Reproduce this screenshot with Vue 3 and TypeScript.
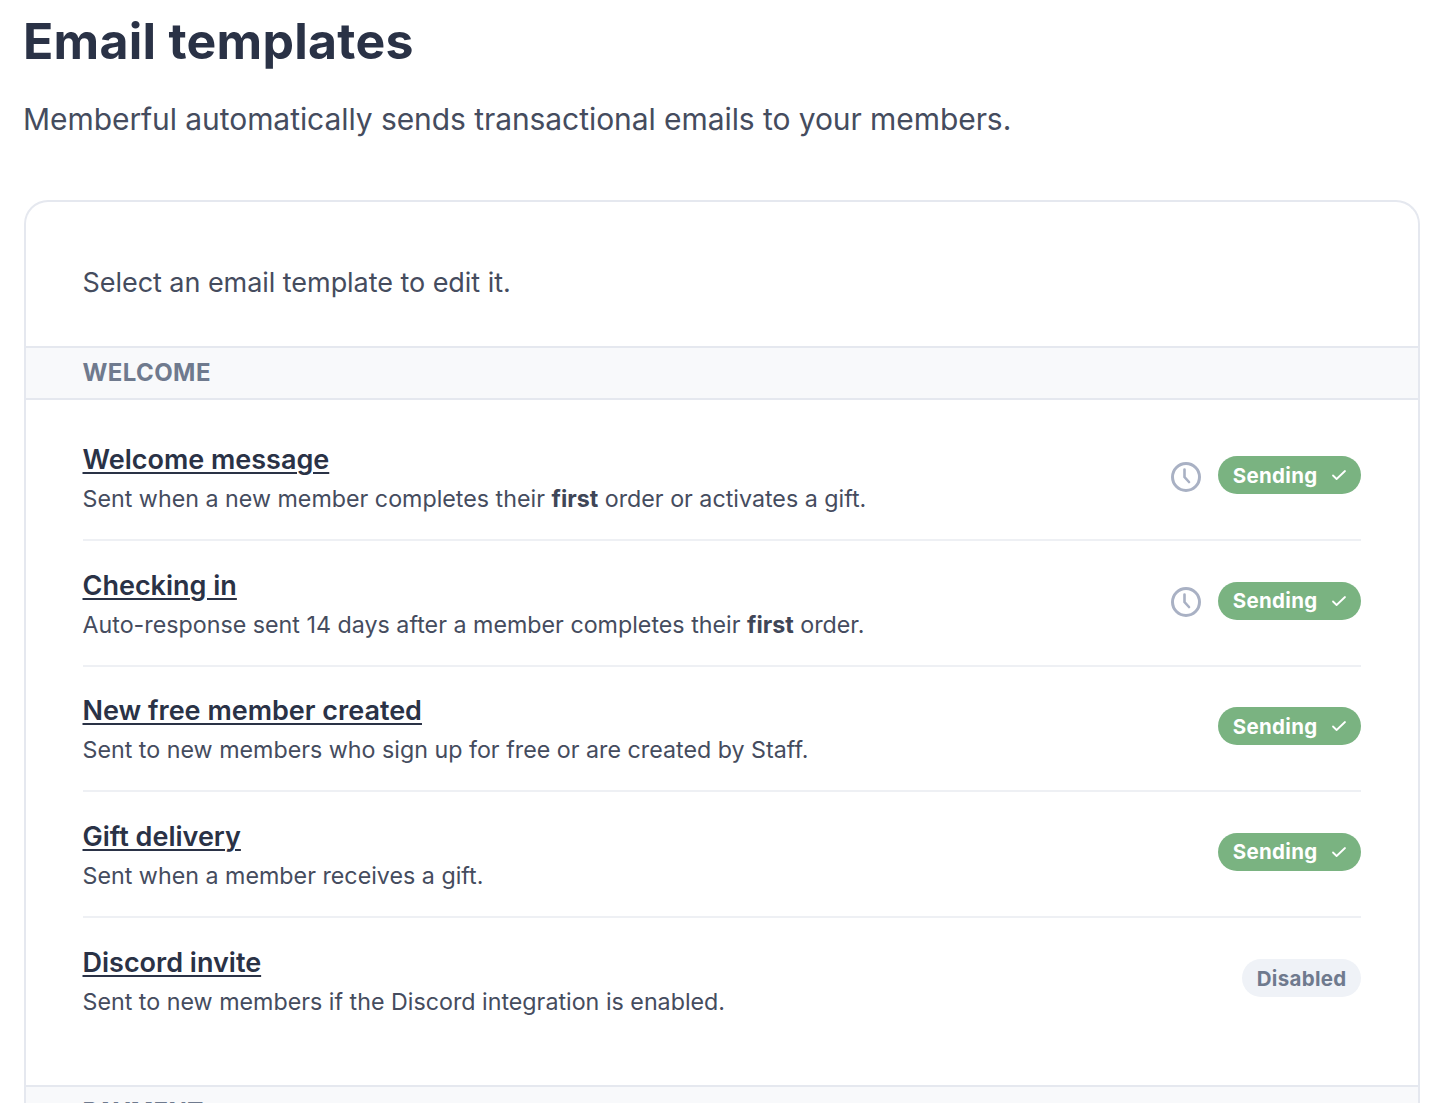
<script setup lang="ts">
interface Row { title: string; pre: string; bold?: string; post?: string; clock?: boolean; sending: boolean }
const rows: Row[] = [
  { title: 'Welcome message', pre: 'Sent when a new member completes their ', bold: 'first', post: ' order or activates a gift.', clock: true, sending: true },
  { title: 'Checking in', pre: 'Auto-response sent 14 days after a member completes their ', bold: 'first', post: ' order.', clock: true, sending: true },
  { title: 'New free member created', pre: 'Sent to new members who sign up for free or are created by Staff.', sending: true },
  { title: 'Gift delivery', pre: 'Sent when a member receives a gift.', sending: true },
  { title: 'Discord invite', pre: 'Sent to new members if the Discord integration is enabled.', sending: false },
]
</script>

<template>
  <main class="page">
    <h1 class="title">Email templates</h1>
    <p class="subtitle">Memberful automatically sends transactional emails to your members.</p>
    <section class="card">
      <p class="intro">Select an email template to edit it.</p>
      <h2 class="section">WELCOME</h2>
      <ul class="rows">
        <li v-for="r in rows" :key="r.title" class="row">
          <div class="text">
            <a class="name">{{ r.title }}</a>
            <p class="desc">{{ r.pre }}<b v-if="r.bold">{{ r.bold }}</b>{{ r.post }}</p>
          </div>
          <div class="status">
            <svg v-if="r.clock" class="clock" width="32" height="32" viewBox="0 0 32 32" fill="none" stroke="#a9b1c4" stroke-width="3" stroke-linecap="round">
              <circle cx="16" cy="16" r="13.5" />
              <path d="M14.5 8.5V16l4.5 5" stroke-width="2.6" />
            </svg>
            <span v-if="r.sending" class="pill green">Sending
              <svg width="16" height="16" viewBox="0 0 16 16" fill="none" stroke="#fff" stroke-width="1.8" stroke-linecap="round" stroke-linejoin="round"><path d="M2 8.5l3.6 3.5L14 4" /></svg>
            </span>
            <span v-else class="pill gray">Disabled</span>
          </div>
        </li>
      </ul>
      <h2 class="section">PAYMENT</h2>
    </section>
  </main>
</template>

<style>
html, body { margin: 0; background: #fff; overflow: hidden; }
</style>

<style scoped>
.page {
  height: 1103px;
  overflow: hidden;
  box-sizing: border-box;
  padding: 0 20px 0 24px;
  font-family: Inter, Lato, sans-serif;
  color: #3f4657;
}
.title {
  margin: 0 0 0 -1px;
  padding-top: 10px;
  font-size: 50px;
  line-height: 62px;
  font-weight: 700;
  letter-spacing: 0.25px;
  color: #2a3246;
}
.subtitle {
  margin: 26px 0 0 -1px;
  font-size: 30px;
  line-height: 42px;
  letter-spacing: -0.07px;
  color: #454c5e;
}
.card {
  margin-top: 60px;
  border: 2px solid #e5e8ef;
  border-bottom: 0;
  border-radius: 24px 24px 0 0;
}
.intro {
  margin: 0;
  padding: 0 56.5px;
  height: 144px;
  line-height: 162px;
  font-size: 27px;
  letter-spacing: -0.05px;
  color: #454c5e;
}
.section {
  margin: 0;
  padding: 0 56.5px;
  height: 50px;
  line-height: 50px;
  font-size: 24px;
  font-weight: 700;
  letter-spacing: 0.4px;
  color: #6f7a8e;
  background: #f8f9fb;
  border-top: 2px solid #e5e8ef;
  border-bottom: 2px solid #e5e8ef;
}
.rows {
  list-style: none;
  margin: 0;
  padding: 15.5px 57px 41.5px;
}
.row {
  display: flex;
  align-items: center;
  justify-content: space-between;
  height: 125.5px;
  box-sizing: border-box;
  border-bottom: 2px solid #eef0f4;
}
.row:last-child { border-bottom: 0; }
.text { margin: 5px 0 0 -0.5px; }
.name {
  display: block;
  font-size: 27px;
  line-height: 36px;
  font-weight: 600;
  color: #2a3246;
  text-decoration: underline;
  text-underline-offset: 3px;
  text-decoration-thickness: 2px;
}
.desc {
  margin: 3px 0 0;
  font-size: 23.25px;
  line-height: 36px;
  color: #454c5e;
}
.desc b { font-weight: 700; color: #3f4657; }
.status { display: flex; align-items: center; gap: 16px; margin-top: -4px; }
.clock { margin-top: 3px; }
.pill {
  display: inline-flex;
  align-items: center;
  height: 38px;
  border-radius: 19px;
  padding: 0 14.5px;
  font-size: 20.5px;
  font-weight: 700;
  letter-spacing: 0.3px;
}
.pill svg { margin-left: 13px; }
.green { background: #7ab381; color: #fff; }
.gray { background: #eff2f7; color: #6f7a8e; }
</style>
